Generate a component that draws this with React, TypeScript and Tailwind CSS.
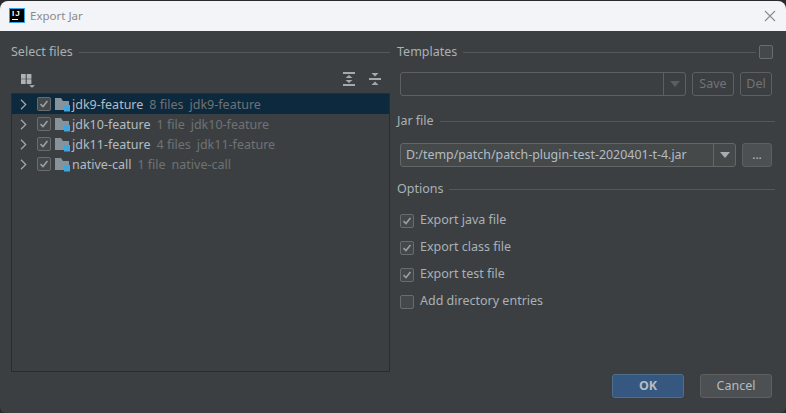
const font = "font-['Noto_Sans','Open_Sans',sans-serif]";

function Chevron() {
  return (
    <svg width="7" height="11" viewBox="0 0 7 11" className="shrink-0">
      <path d="M1 .8 5.700 5.500 1 10.200" fill="none" stroke="#a0a5a8" strokeWidth="1.3" />
    </svg>
  );
}

function FolderIcon() {
  return (
    <svg width="16" height="16" viewBox="0 0 16 16" className="shrink-0">
      <path d="M0 2h6l2 3h6v9H0z" fill="#87939a" />
      <rect x="9" y="9" width="6" height="6.500" fill="#40a5dd" />
    </svg>
  );
}

function Check({ checked = false }: { checked?: boolean }) {
  return (
    <span className="flex h-[14px] w-[14px] shrink-0 items-center justify-center rounded-[2px] border border-[#6b6b6b] bg-[#43494a]">
      {checked && (
        <svg width="10" height="10" viewBox="0 0 10 10">
          <path d="M1.500 5.200 4 7.600 8.400 2" fill="none" stroke="#989ea2" strokeWidth="1.6" />
        </svg>
      )}
    </span>
  );
}

function Section({ title, className = "" }: { title: string; className?: string }) {
  return (
    <div className={`flex items-center gap-[6px] ${className}`}>
      <span className="text-[12.5px] leading-[16px] text-[#a9b1b6]">{title}</span>
      <div className="h-px flex-1 bg-[#55585a]" />
    </div>
  );
}

function TreeRow({ name, count, selected }: { name: string; count: string; selected?: boolean }) {
  return (
    <div className={`flex h-5 items-center pl-[8px] ${selected ? "bg-[#0d293e]" : ""}`}>
      <Chevron />
      <span className="ml-[10px] flex"><Check checked /></span>
      <span className="ml-[4px] flex"><FolderIcon /></span>
      <span className="ml-px pt-[2px] text-[12.5px] whitespace-nowrap text-[#b4bcc2]">{name}</span>
      <span className="ml-[6px] pt-[2px] text-[12.5px] whitespace-nowrap text-[#6f7274]">{count}</span>
      <span className="ml-[6px] pt-[2px] text-[12.5px] whitespace-nowrap text-[#6f7274]">{name}</span>
    </div>
  );
}

function Option({ label, checked }: { label: string; checked?: boolean }) {
  return (
    <div className="flex h-[27px] items-center gap-[6px]">
      <Check checked={checked} />
      <span className="text-[12.5px] text-[#a9b1b6]">{label}</span>
    </div>
  );
}

function Arrow({ color }: { color: string }) {
  return (
    <svg width="10" height="6" viewBox="0 0 10 6">
      <path d="M0 0h10L5 6z" fill={color} />
    </svg>
  );
}

export default function App() {
  return (
    <div className={`${font} h-[413px] w-[786px] overflow-hidden bg-[#2b2b2b] pt-px`}>
      <div className="flex h-full flex-col overflow-hidden rounded-t-[8px] rounded-b-[6px] bg-[#3c3f41]">
        {/* Title bar */}
        <div className="flex h-[30px] shrink-0 items-center bg-[#f2f4f8] pl-[9px] pr-[7px]">
          <div className="relative mb-[2px] h-[15px] w-[16px] border border-[#3b9fe0] bg-black">
            <span className="absolute left-[2px] top-0 font-['Liberation_Sans',sans-serif] text-[8px] leading-[9px] font-bold tracking-[1px] text-white">IJ</span>
            <span className="absolute bottom-[2px] left-[2px] h-px w-[6px] bg-white" />
          </div>
          <span className="ml-[5px] text-[11.5px] text-[#8a8a8a]">Export Jar</span>
          <svg width="12" height="12" viewBox="0 0 12 12" className="ml-auto mr-[3px]">
            <path d="M1 1l10 10M11 1 1 11" stroke="#8c8c8c" strokeWidth="1.1" />
          </svg>
        </div>

        <div className="flex min-h-0 flex-1 gap-[7px] pl-[11px] pr-[11px] pt-[13px]">
          {/* Left column */}
          <div className="flex w-[379px] shrink-0 flex-col">
            <Section title="Select files" />
            <div className="flex h-[33px] items-center justify-between pl-[10px] pr-[9px] pt-[5px]">
              <svg width="15" height="18" viewBox="0 0 15 18">
                <path d="M0 4h4.700v4.700H0zM5.700 4h4.700v4.700H5.700zM0 9.300h4.700V14H0zM5.700 9.300h4.700V14H5.700z" fill="#afb3b6" />
                <path d="M8 15.300h6l-3 2.400z" fill="#afb3b6" />
              </svg>
              <div className="flex items-center gap-[14px]">
                <svg width="12" height="14" viewBox="0 0 12 14">
                  <path d="M0 0h12v2H0zM0 12h12v2H0zM2.500 6 6 3l3.500 3zM2.500 8 6 11l3.500-3z" fill="#a5a9ac" />
                </svg>
                <svg width="12" height="14" viewBox="0 0 12 14">
                  <path d="M0 6h12v2H0zM2.500 1h7L6 4.500zM2.500 13h7L6 9.500z" fill="#a5a9ac" />
                </svg>
              </div>
            </div>
            <div className="h-[279px] border border-[#2b2b2b]">
              <TreeRow name="jdk9-feature" count="8 files" selected />
              <TreeRow name="jdk10-feature" count="1 file" />
              <TreeRow name="jdk11-feature" count="4 files" />
              <TreeRow name="native-call" count="1 file" />
            </div>
          </div>

          {/* Right column */}
          <div className="flex min-w-0 flex-1 flex-col">
            <div className="flex items-center gap-[3px]">
              <Section title="Templates" className="flex-1" />
              <span className="mr-[2px] h-[14px] w-[14px] rounded-[2px] border border-[#6b6b6b] bg-[#43494a]" />
            </div>
            <div className="mt-[12px] ml-[3px] flex h-6 items-center gap-[6px]">
              <div className="flex h-full w-[286px] rounded-[3px] border border-[#5e6060]">
                <div className="flex-1" />
                <div className="flex w-[22px] items-center justify-center border-l border-[#5e6060]">
                  <Arrow color="#5b5e60" />
                </div>
              </div>
              <div className="flex h-full w-[42px] items-center justify-center rounded-[3px] border border-[#5e6060] text-[12.5px] text-[#717476]">Save</div>
              <div className="flex h-full w-[32px] items-center justify-center rounded-[3px] border border-[#5e6060] text-[12.5px] text-[#717476]">Del</div>
            </div>
            <Section title="Jar file" className="mt-[17px]" />
            <div className="mt-[14px] ml-[3px] flex h-6 items-center gap-[6px]">
              <div className="flex h-full w-[336px] rounded-[3px] border border-[#646767] bg-[#45494a]">
                <span className="flex-1 truncate pl-[5px] text-[12.4px] leading-[22px] text-[#b4bcc2]">D:/temp/patch/patch-plugin-test-2020401-t-4.jar</span>
                <div className="flex w-[22px] items-center justify-center border-l border-[#646767]">
                  <Arrow color="#a9adb0" />
                </div>
              </div>
              <div className="flex h-full w-[30px] items-center justify-center rounded-[3px] border border-[#5e6060] bg-[#4c5052] text-[12px] text-[#b4bcc2]">...</div>
            </div>
            <Section title="Options" className="mt-[14px]" />
            <div className="mt-[10px] ml-[3px] flex flex-col">
              <Option label="Export java file" checked />
              <Option label="Export class file" checked />
              <Option label="Export test file" checked />
              <Option label="Add directory entries" />
            </div>
          </div>
        </div>

        {/* Footer */}
        <div className="flex h-[39px] shrink-0 justify-end gap-[16px] pr-[14px]">
          <button className="h-6 w-[72px] rounded-[3px] border border-[#4c708c] bg-[#365880] text-[12.5px] font-bold text-[#b4bcc2]">OK</button>
          <button className="h-6 w-[72px] rounded-[3px] border border-[#5e6060] bg-[#4c5052] text-[12.5px] text-[#b4bcc2]">Cancel</button>
        </div>
      </div>
    </div>
  );
}
